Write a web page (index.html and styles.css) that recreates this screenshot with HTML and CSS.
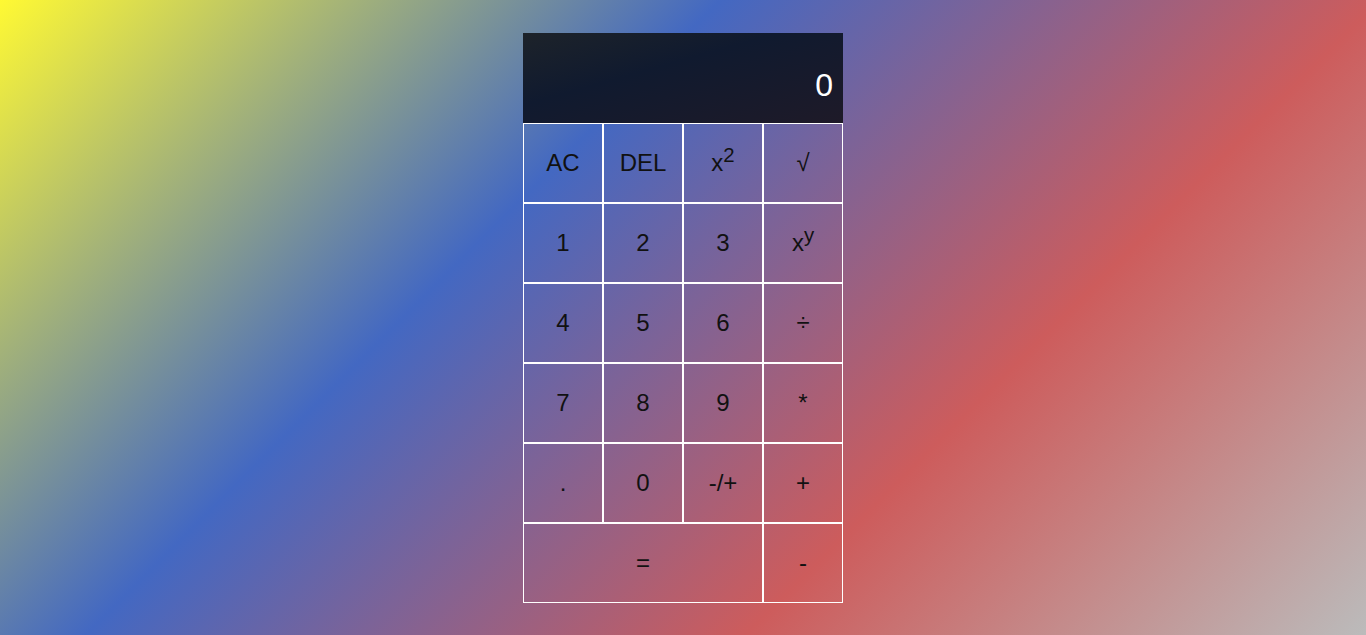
FILE: index.html
```html
<!DOCTYPE html>
<html lang="en">
<head>
<meta charset="utf-8">
<title>Calculator</title>
<link rel="stylesheet" href="styles.css">
</head>
<body>
<div class="calculator">
  <div class="display">0</div>
  <div class="keys">
    <button class="key">AC</button>
    <button class="key">DEL</button>
    <button class="key">x<sup>2</sup></button>
    <button class="key">&radic;</button>
    <button class="key">1</button>
    <button class="key">2</button>
    <button class="key">3</button>
    <button class="key">x<sup>y</sup></button>
    <button class="key">4</button>
    <button class="key">5</button>
    <button class="key">6</button>
    <button class="key">&divide;</button>
    <button class="key">7</button>
    <button class="key">8</button>
    <button class="key">9</button>
    <button class="key">*</button>
    <button class="key">.</button>
    <button class="key">0</button>
    <button class="key">-/+</button>
    <button class="key">+</button>
    <button class="key key-wide">=</button>
    <button class="key">-</button>
  </div>
</div>
</body>
</html>
```
FILE: styles.css
```css
html, body {
  margin: 0;
  padding: 0;
  height: 100%;
}
body {
  background: linear-gradient(135deg, #fff933 0%, #4368c2 36%, #cd5c5c 69%, #bbbbbb 100%);
  font-family: "Liberation Sans", Arial, sans-serif;
  display: flex;
  justify-content: center;
  align-items: flex-start;
  padding-top: 33px;
  box-sizing: border-box;
}
.calculator {
  width: 320px;
}
.display {
  height: 90px;
  box-sizing: border-box;
  background: linear-gradient(to bottom right, #1d232a 0%, #101a2f 40%, #1e1a28 100%);
  color: #fff;
  font-size: 32px;
  display: flex;
  align-items: center;
  justify-content: flex-end;
  padding: 14px 10px 0 10px;
}
.keys {
  display: grid;
  grid-template-columns: repeat(4, 80px);
  grid-auto-rows: 80px;
}
.key {
  margin: 0;
  padding: 0;
  box-sizing: border-box;
  border: 1px solid #fff;
  background: transparent;
  color: #111;
  font-family: "Liberation Sans", Arial, sans-serif;
  font-size: 24px;
  cursor: pointer;
}
.key sup {
  font-size: 0.85em;
  line-height: 0;
}
.key-wide {
  grid-column: span 3;
}
```
